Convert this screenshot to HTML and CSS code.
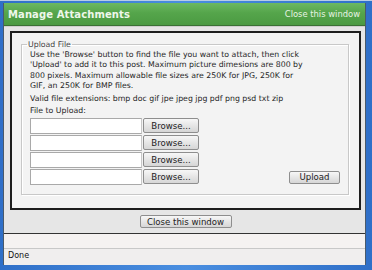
FILE: index.html
```html
<!DOCTYPE html>
<html lang="en">
<head>
    <meta charset="UTF-8">
    <title>Manage Attachments</title>
    <link rel="stylesheet" href="styles.css">
</head>
<body>
    <div class="frame">
        <div class="window">
            <div class="header">
                <span class="title">Manage Attachments</span>
                <a class="header-close" href="#">Close this window</a>
            </div>
            <div class="content">
                <div class="panel">
                    <fieldset class="upload">
                        <legend>Upload File</legend>
                        <p class="help">Use the 'Browse' button to find the file you want to attach, then click<br>
                            'Upload' to add it to this post. Maximum picture dimesions are 800 by<br>
                            800 pixels. Maximum allowable file sizes are 250K for JPG, 250K for<br>
                            GIF, an 250K for BMP files.</p>
                        <p class="help">Valid file extensions: bmp doc gif jpe jpeg jpg pdf png psd txt zip</p>
                        <p class="help">File to Upload:</p>
                        <div class="files">
                            <div class="file-rows">
                                <div class="file-row"><span class="file-input"></span><button class="btn browse">Browse...</button></div>
                                <div class="file-row"><span class="file-input"></span><button class="btn browse">Browse...</button></div>
                                <div class="file-row"><span class="file-input"></span><button class="btn browse">Browse...</button></div>
                                <div class="file-row"><span class="file-input"></span><button class="btn browse">Browse...</button></div>
                            </div>
                            <button class="btn upload-btn">Upload</button>
                        </div>
                    </fieldset>
                </div>
                <div class="actions">
                    <button class="btn close-btn">Close this window</button>
                </div>
            </div>
            <div class="blank"></div>
            <div class="status">Done</div>
        </div>
    </div>
</body>
</html>
```

FILE: styles.css
```css
* { margin: 0; padding: 0; box-sizing: border-box; }
body {
    font-family: "DejaVu Sans", Verdana, sans-serif;
    background: #3a7bd0;
}
.frame {
    width: 372px;
    height: 270px;
    padding: 2px 6px 5px 3px;
    background: linear-gradient(90deg, #2f6fc8 0%, #4a8ee0 50%, #2f6fc8 100%);
    border-top: 1px solid #b8cde6;
}
.window {
    height: 100%;
    display: flex;
    flex-direction: column;
    background: #ece9e8;
    border-left: 1px solid #4a5a6a;
    border-right: 1px solid #4a5a6a;
}
.header {
    height: 23px;
    display: flex;
    align-items: center;
    justify-content: space-between;
    padding: 0 5px 0 4px;
    background: linear-gradient(180deg, #6cb862 0%, #55a54b 45%, #4b9a42 100%);
    border-bottom: 1px solid #3a7034;
}
.title {
    color: #eef7ea;
    font-weight: bold;
    font-size: 10px;
    letter-spacing: 0.1px;
}
.header-close {
    color: #e8f4e4;
    font-size: 8.4px;
    text-decoration: none;
}
.content {
    height: 208px;
    background: #e6e6e6;
    border-top: 1px solid #cfcfcf;
    border-bottom: 1px solid #333;
    padding: 4px 4px 0 6px;
}
.panel {
    height: 179px;
    background: #f3f3f3;
    border: 2px solid #1e1e1e;
    padding: 7px 10px 0 9px;
}
.upload {
    height: 155px;
    border: 1px solid #c8c8c8;
    box-shadow: inset 1px 1px 0 #fff, 1px 1px 0 #fff;
    padding: 1px 4px 0 8px;
}
.upload legend {
    margin-left: -3px;
    padding: 0 1px;
    font-size: 7.8px;
    color: #444;
}
.help {
    font-size: 7.8px;
    line-height: 10.3px;
    color: #262626;
    margin-bottom: 2.5px;
    white-space: nowrap;
}
.help:last-of-type { margin-bottom: 0; }
.files {
    display: flex;
    align-items: flex-end;
    justify-content: space-between;
    margin-top: 1px;
    padding-right: 4px;
}
.file-rows {
    display: flex;
    flex-direction: column;
    gap: 1px;
}
.file-row {
    display: flex;
    align-items: center;
    gap: 1px;
    height: 16px;
}
.file-input {
    width: 112px;
    height: 16px;
    background: #fff;
    border: 1px solid #a9a9a9;
    border-right-color: #c8c8c8;
}
.btn {
    font-family: "DejaVu Sans", Verdana, sans-serif;
    font-size: 8.6px;
    color: #222;
    background: linear-gradient(180deg, #f7f7f7 0%, #e6e6e6 50%, #d6d6d6 100%);
    border: 1px solid #8e8e8e;
    border-radius: 2px;
}
.browse {
    width: 56px;
    height: 15px;
}
.upload-btn {
    width: 51px;
    height: 13px;
    margin-bottom: 1px;
}
.actions {
    display: flex;
    justify-content: center;
    padding-top: 5px;
}
.close-btn {
    width: 92px;
    height: 13px;
}
.blank {
    height: 15px;
    background: #f5f2f1;
    border-bottom: 1px solid #c8c8c8;
}
.status {
    flex: 1;
    background: #f0eeee;
    font-size: 8px;
    color: #111;
    padding: 2px 0 0 4px;
}
```
